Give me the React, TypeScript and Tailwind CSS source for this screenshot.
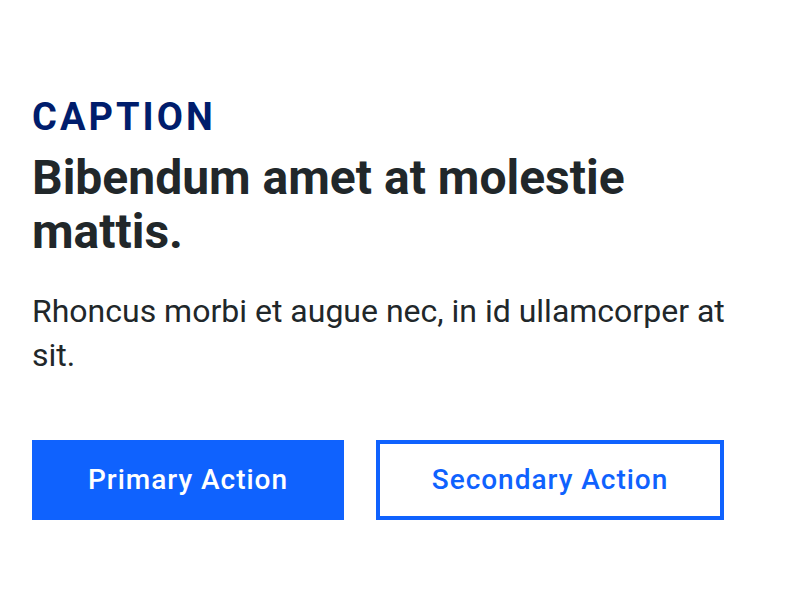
import React from 'react';

export default function App() {
  return (
    <div className="min-h-[616px] w-[786px] bg-white font-['Roboto',sans-serif]">
      <div className="px-8 pt-[95px]">
        <p className="text-[38px] font-bold leading-[44px] tracking-[0.08em] text-[#001d6c]">CAPTION</p>
        <h1 className="mt-[12px] w-[680px] text-[48px] font-bold leading-[54px] text-[#21272a]">
          Bibendum amet at molestie mattis.
        </h1>
        <p className="mt-[30px] w-[720px] text-[32px] leading-[44px] text-[#21272a]">
          Rhoncus morbi et augue nec, in id ullamcorper at sit.
        </p>
        <div className="mt-[63px] flex gap-8">
          <button className="h-20 w-[312px] bg-[#0f62fe] text-[28px] font-medium tracking-[0.035em] text-white">
            Primary Action
          </button>
          <button className="h-20 w-[348px] border-4 border-[#0f62fe] bg-white text-[28px] font-medium tracking-[0.035em] text-[#0f62fe]">
            Secondary Action
          </button>
        </div>
      </div>
    </div>
  );
}
